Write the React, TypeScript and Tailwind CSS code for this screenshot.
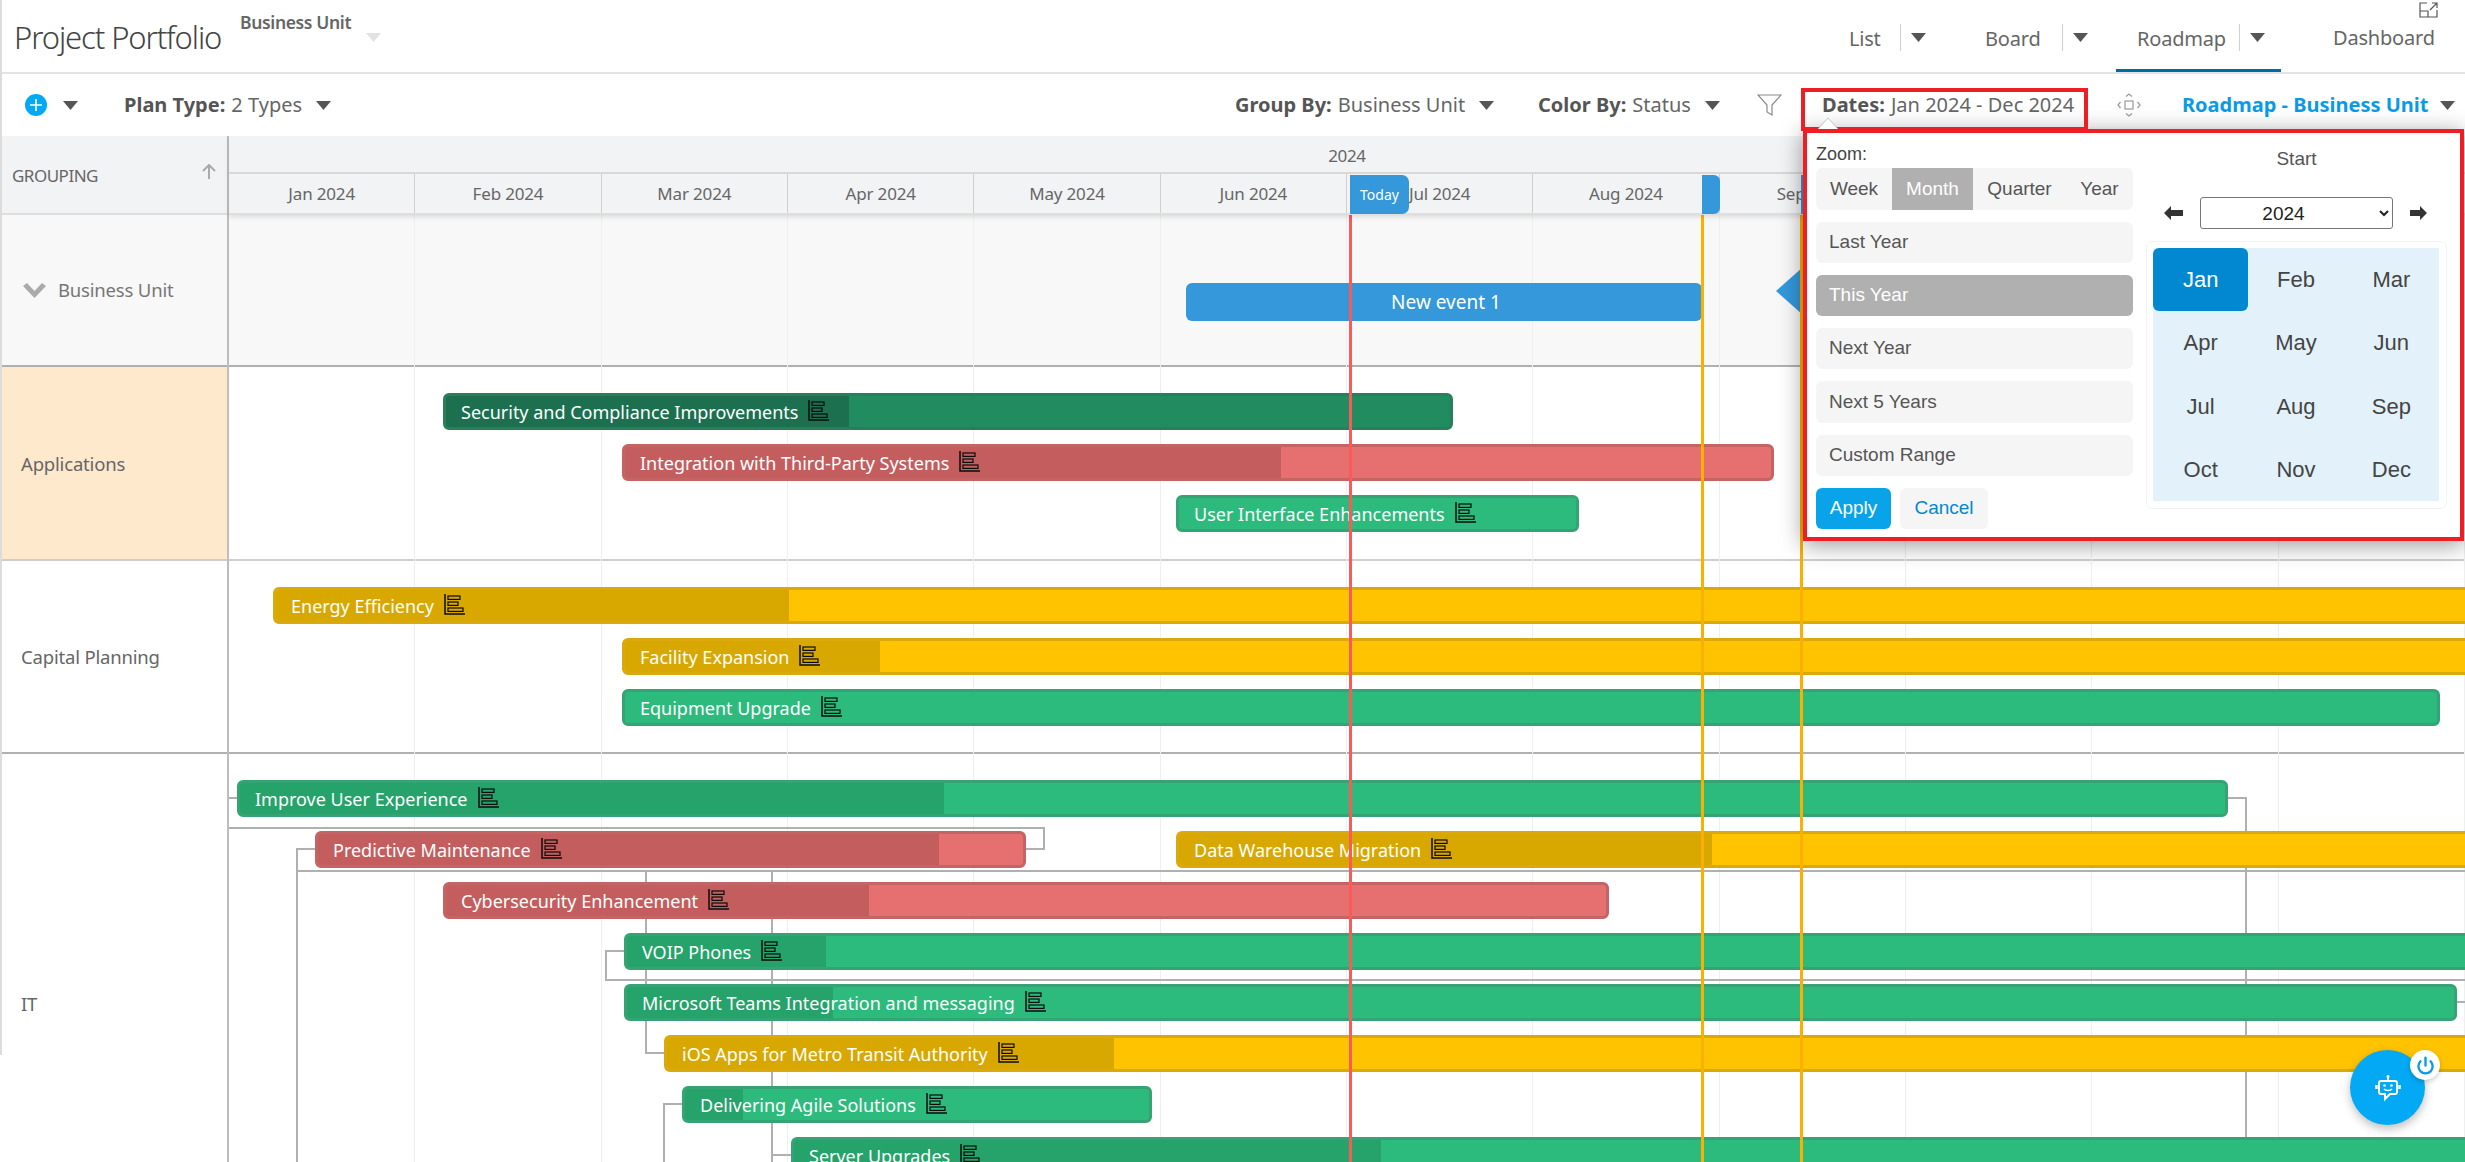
import React from "react";
import { Power } from "lucide-react";

const X0 = 229;
const Y0 = 215;

const MONTHS = ["Jan", "Feb", "Mar", "Apr", "May", "Jun", "Jul", "Aug", "Sep", "Oct", "Nov", "Dec"];

type Tone = "green" | "red" | "yellow" | "dark";
type BarData = { label?: string; x: number; end: number; y: number; progress: number; tone: Tone };

const TONES: Record<Tone, { border: string; fill: string; done: string }> = {
  green: { border: "border-[#36a374]", fill: "bg-[#2cbb7c]", done: "bg-[#26a26b]" },
  red: { border: "border-[#c46464]", fill: "bg-[#e67070]", done: "bg-[#c45e5e]" },
  yellow: { border: "border-[#d9a90f]", fill: "bg-[#ffc300]", done: "bg-[#d9a800]" },
  dark: { border: "border-[#2a7f5a]", fill: "bg-[#218c5f]", done: "bg-[#1c7050]" },
};

const BARS: BarData[] = [
  { label: "Security and Compliance Improvements", x: 443, end: 1453, y: 393, progress: 849, tone: "dark" },
  { label: "Integration with Third-Party Systems", x: 622, end: 1774, y: 444, progress: 1281, tone: "red" },
  { label: "User Interface Enhancements", x: 1176, end: 1579, y: 495, progress: 1176, tone: "green" },
  { label: "Energy Efficiency", x: 273, end: 2480, y: 587, progress: 789, tone: "yellow" },
  { label: "Facility Expansion", x: 622, end: 2480, y: 638, progress: 880, tone: "yellow" },
  { label: "Equipment Upgrade", x: 622, end: 2440, y: 689, progress: 622, tone: "green" },
  { label: "Improve User Experience", x: 237, end: 2228, y: 780, progress: 944, tone: "green" },
  { label: "Predictive Maintenance", x: 315, end: 1026, y: 831, progress: 939, tone: "red" },
  { label: "Data Warehouse Migration", x: 1176, end: 2480, y: 831, progress: 1712, tone: "yellow" },
  { label: "Cybersecurity Enhancement", x: 443, end: 1609, y: 882, progress: 869, tone: "red" },
  { label: "VOIP Phones", x: 624, end: 2480, y: 933, progress: 826, tone: "green" },
  { label: "Microsoft Teams Integration and messaging", x: 624, end: 2457, y: 984, progress: 833, tone: "green" },
  { label: "iOS Apps for Metro Transit Authority", x: 664, end: 2480, y: 1035, progress: 1114, tone: "yellow" },
  { label: "Delivering Agile Solutions", x: 682, end: 1152, y: 1086, progress: 743, tone: "green" },
  { label: "Server Upgrades", x: 791, end: 2480, y: 1137, progress: 1381, tone: "green" },
];

const LINES = [
  { x: 229, y: 797, w: 8, h: 2 },
  { x: 2228, y: 797, w: 19, h: 2 },
  { x: 2245, y: 797, w: 2, h: 365 },
  { x: 229, y: 827, w: 815, h: 2 },
  { x: 1043, y: 827, w: 2, h: 23 },
  { x: 1025, y: 848, w: 19, h: 2 },
  { x: 297, y: 848, w: 18, h: 2 },
  { x: 296, y: 848, w: 2, h: 314 },
  { x: 296, y: 870, w: 2170, h: 2 },
  { x: 645, y: 870, w: 2, h: 184 },
  { x: 645, y: 1052, w: 19, h: 2 },
  { x: 771, y: 870, w: 2, h: 292 },
  { x: 771, y: 1154, w: 20, h: 2 },
  { x: 605, y: 950, w: 19, h: 2 },
  { x: 605, y: 950, w: 2, h: 31 },
  { x: 605, y: 979, w: 1860, h: 2 },
  { x: 664, y: 1103, w: 18, h: 2 },
  { x: 663, y: 1103, w: 2, h: 59 },
  { x: 2457, y: 1001, w: 8, h: 2 },
];

function Caret({ className = "fill-[#555555]" }: { className?: string }) {
  return (
    <svg width="15" height="9" viewBox="0 0 15 9" className={className}>
      <polygon points="0,0 15,0 7.5,9" />
    </svg>
  );
}

function GanttIcon() {
  return (
    <svg width="21" height="21" viewBox="0 0 21 21" fill="none" stroke="#0b0b0b" strokeWidth="1.2" className="ml-[10px] mb-[3px] shrink-0">
      <path d="M1 0V20H21" strokeWidth="1.5" />
      <rect x="4" y="2" width="12" height="3.4" />
      <rect x="4" y="8" width="10" height="3.4" />
      <rect x="4" y="14" width="15" height="3.4" />
    </svg>
  );
}

function Bar({ bar }: { bar: BarData }) {
  const t = TONES[bar.tone];
  const width = bar.end - bar.x;
  return (
    <div
      className={`absolute h-[37px] rounded-[6px] border-[3px] overflow-hidden ${t.border} ${t.fill}`}
      style={{ left: bar.x - X0, top: bar.y - Y0, width }}
    >
      <div className={`absolute left-0 top-0 bottom-0 ${t.done}`} style={{ width: Math.max(0, bar.progress - bar.x - 3) }} />
      <div className="relative flex h-full items-center whitespace-nowrap pl-[15px] text-[18px] leading-none text-white font-['Noto_Sans',sans-serif]">
        <span>{bar.label}</span>
        <GanttIcon />
      </div>
    </div>
  );
}

function Tab({ label, left, toSep, width, active }: { label: string; left: number; toSep: number; width: number; active?: boolean }) {
  return (
    <div className={`flex h-full items-center border-b-[3px] pt-[6px] ${active ? "border-[#0069a8]" : "border-transparent"}`} style={{ width, paddingLeft: left }}>
      <span className="whitespace-nowrap pt-[3px]" style={{ width: toSep }}>{label}</span>
      <span className="h-[27px] w-px bg-[#d0d0d0]" />
      <span className="ml-[10px] flex items-center"><Caret /></span>
    </div>
  );
}

function Labeled({ name, value, width, caret = true }: { name: string; value: string; width: number; caret?: boolean }) {
  return (
    <div className="flex items-center whitespace-nowrap" style={{ width }}>
      <span className="font-bold text-[#555555]">{name}</span>
      <span className="ml-[6px]">{value}</span>
      {caret && <span className="ml-[14px]"><Caret /></span>}
    </div>
  );
}

function RobotIcon() {
  return (
    <svg width="26" height="28" viewBox="0 0 26 28" fill="none" stroke="#ffffff" strokeWidth="2">
      <circle cx="13" cy="2.5" r="1.5" fill="#fff" stroke="none" />
      <path d="M13 3V7" />
      <path d="M6 7H20A2 2 0 0 1 22 9V18A2 2 0 0 1 20 20H15L10 25V20H6A2 2 0 0 1 4 18V9A2 2 0 0 1 6 7Z" />
      <path d="M1.5 11V15M24.5 11V15" strokeWidth="2.5" />
      <circle cx="9.5" cy="11.5" r="1.3" fill="#fff" stroke="none" />
      <circle cx="16.5" cy="11.5" r="1.3" fill="#fff" stroke="none" />
      <path d="M9 15C10.5 17 15.5 17 17 15" strokeWidth="1.6" />
    </svg>
  );
}

export default function App() {
  return (
    <div className="relative h-screen w-full overflow-hidden bg-white text-[#666666] font-['Noto_Sans',sans-serif]">
      {/* Left edge rule */}
      <div className="absolute left-0 top-0 z-20 h-[1055px] w-[2px] bg-[#dcdcdc]" />

      {/* Top header */}
      <header className="flex h-[74px] items-stretch border-b-2 border-[#e3e3e3]">
        <div className="flex w-[240px] items-center pl-[14px] pt-[3px] text-[31px] font-light tracking-[-0.035em] text-[#444444] whitespace-nowrap">Project Portfolio</div>
        <div className="flex w-[150px] flex-col pt-[12px]">
          <span className="text-[17.5px] font-semibold leading-[20px] tracking-[-0.02em] text-[#666666] whitespace-nowrap">Business Unit</span>
          <span className="ml-[126px] mt-px"><Caret className="fill-[#e2e2e2]" /></span>
        </div>
        <nav className="ml-auto flex w-[637px] items-stretch text-[20px] tracking-[-0.01em] text-[#666666]">
          <Tab label="List" left={21} toSep={51} width={136} />
          <Tab label="Board" left={21} toSep={77} width={152} />
          <Tab label="Roadmap" left={21} toSep={102} width={165} active />
          <div className="relative flex items-center pl-[52px] pt-[4px]">
            <span className="whitespace-nowrap">Dashboard</span>
            <svg width="19" height="16" viewBox="0 0 19 16" fill="none" stroke="#555" strokeWidth="1.2" className="absolute left-[138px] top-[2px]">
              <path d="M8 1H1V15H18V8" />
              <path d="M1 9H9V15" />
              <path d="M11 8L18 1M13 1H18V6" />
            </svg>
          </div>
        </nav>
      </header>

      {/* Toolbar */}
      <div className="flex h-[62px] items-center text-[20px] text-[#666666]">
        <div className="flex w-[1235px] items-center">
          <span className="ml-[25px] flex h-[22px] w-[22px] items-center justify-center rounded-full bg-[#03a9f4]">
            <svg width="14" height="14" viewBox="0 0 14 14" stroke="#fff" strokeWidth="1.6"><path d="M7 1V13M1 7H13" /></svg>
          </span>
          <span className="ml-[16px]"><Caret /></span>
          <div className="ml-[46px]"><Labeled name="Plan Type:" value="2 Types" width={300} /></div>
        </div>
        <Labeled name="Group By:" value="Business Unit" width={303} />
        <Labeled name="Color By:" value="Status" width={219} />
        <div className="flex w-[65px] items-center">
          <svg width="25" height="22" viewBox="0 0 25 22" fill="none" stroke="#8a8a8a" strokeWidth="1.2">
            <path d="M1 1H24L15 11V21L10 18V11Z" />
          </svg>
        </div>
        <Labeled name="Dates:" value="Jan 2024 - Dec 2024" width={295} caret={false} />
        <div className="flex w-[65px] items-center">
          <svg width="24" height="24" viewBox="0 0 24 24" fill="none" stroke="#9a9a9a" strokeWidth="1.2">
            <rect x="8" y="8" width="8" height="8" />
            <path d="M9 3.5L12 1L15 3.5M9 20.5L12 23L15 20.5M3.5 9L1 12L3.5 15M20.5 9L23 12L20.5 15" />
          </svg>
        </div>
        <div className="flex items-center whitespace-nowrap font-bold text-[#0a9be8]">
          <span className="w-[258px]">Roadmap - Business Unit</span>
          <Caret />
        </div>
      </div>

      {/* Gantt */}
      <div className="flex h-[1026px] overflow-hidden">
        {/* Sidebar */}
        <aside className="flex w-[229px] shrink-0 flex-col border-r-2 border-[#bdbdbd] text-[18.5px] tracking-[-0.01em] text-[#666666]">
          <div className="flex h-[79px] shrink-0 items-center border-b-2 border-[#dedede] bg-[#f2f3f5] pl-[12px] pr-[11px]">
            <span className="pt-[2px] text-[17px] tracking-[-0.03em]">GROUPING</span>
            <svg width="14" height="15" viewBox="0 0 14 15" fill="none" stroke="#aaaaaa" strokeWidth="2" className="ml-auto mb-[6px]">
              <path d="M7 15V2M1 7L7 1L13 7" />
            </svg>
          </div>
          <div className="flex h-[152px] shrink-0 items-center border-b-2 border-[#b0b0b0] bg-[#f8f8f8] pl-[23px]">
            <svg width="23" height="15" viewBox="0 0 23 15" fill="#aaaaaa"><polygon points="0,3 4,0 11.5,8 19,0 23,3 11.5,15" /></svg>
            <span className="ml-[12px] text-[#777777]">Business Unit</span>
          </div>
          <div className="flex h-[194px] shrink-0 items-center border-b-2 border-[#d0cdc8] bg-[#fee9cc] pl-[21px] pt-px">Applications</div>
          <div className="flex h-[193px] shrink-0 items-center border-b-2 border-[#b0b0b0] pl-[21px]">Capital Planning</div>
          <div className="flex h-[500px] shrink-0 items-center pl-[21px]">IT</div>
        </aside>

        {/* Timeline */}
        <section className="relative min-w-0 flex-1">
          <div className="relative z-10 h-[79px] border-b-2 border-[#dedede] bg-[#f2f3f5] shadow-[0_2px_5px_rgba(0,0,0,0.12)]">
            <div className="flex h-[38px] items-center justify-center border-b-2 border-[#d8d8d8] text-[17px] tracking-[-0.02em]">
              <span className="pt-[4px]">2024</span>
            </div>
            <div className="grid h-[39px] grid-cols-12 text-[17px] tracking-[-0.01em]">
              {MONTHS.map((m, i) => (
                <div key={m} className={`flex items-center justify-center ${i < 11 ? "border-r border-[#cfcfcf]" : ""}`}>{m} 2024</div>
              ))}
            </div>
            {/* date tags */}
            <div className="absolute left-[1121px] top-[39px] flex h-[39px] w-[59px] items-center justify-center rounded-r-[7px] bg-[#3498db] text-[14px] text-white">Today</div>
            <div className="absolute left-[1473px] top-[39px] h-[39px] w-[18px] rounded-r-[6px] bg-[#3498db]" />
            <div className="absolute left-[1572px] top-[39px] h-[39px] w-[6px] bg-[#3498db]" />
          </div>

          <div className="relative h-[947px] overflow-hidden">
            {/* row backgrounds */}
            <div className="h-[152px] border-b-2 border-[#b0b0b0] bg-[#f8f8f8]" />
            <div className="h-[194px] border-b-2 border-[#cfcfcf]" />
            <div className="h-[193px] border-b-2 border-[#b0b0b0]" />

            {/* month grid */}
            <div className="absolute inset-0 grid grid-cols-12">
              {MONTHS.map((m) => (
                <div key={m} className="border-r border-[#efefef]" />
              ))}
            </div>

            {LINES.map((l, i) => (
              <div key={i} className="absolute bg-[#b0b0b0]" style={{ left: l.x - X0, top: l.y - Y0, width: l.w, height: l.h }} />
            ))}

            {/* event + milestone */}
            <div className="absolute flex h-[38px] items-center justify-center rounded-[6px] bg-[#3498db] pl-[4px] text-[19px] text-white" style={{ left: 1186 - X0, top: 283 - Y0, width: 516 }}>
              New event 1
            </div>
            <svg width="54" height="48" viewBox="0 0 54 48" className="absolute fill-[#3498db]" style={{ left: 1776 - X0, top: 267 - Y0 }}>
              <polygon points="0,24 27,0 54,24 27,48" />
            </svg>

            {BARS.map((b) => (
              <Bar key={b.label} bar={b} />
            ))}

            {/* markers */}
            <div className="absolute inset-y-0 w-[3px] bg-[#f95a5a]" style={{ left: 1349 - X0 }} />
            <div className="absolute inset-y-0 w-[3px] bg-[#fbb000]" style={{ left: 1701 - X0 }} />
            <div className="absolute inset-y-0 w-[3px] bg-[#fbb000]" style={{ left: 1800 - X0 }} />
          </div>
        </section>
      </div>

      {/* Dates highlight */}
      <div className="pointer-events-none absolute left-[1801px] top-[88px] z-40 h-[43px] w-[287px] border-4 border-[#ee1f24]" />
      <svg width="20" height="11" viewBox="0 0 20 11" fill="#ffffff" stroke="#c4c4c4" className="absolute left-[1818px] top-[118px] z-40">
        <path d="M0 11L10 0L20 11" />
      </svg>

      {/* Dates popover */}
      <div className="absolute left-[1803px] top-[129px] z-30 flex h-[412px] w-[661px] border-4 border-[#ee1f24] bg-white pl-[9px] text-[#444444] shadow-[0_4px_22px_rgba(0,0,0,0.4)] font-['Liberation_Sans',Arial,sans-serif]">
        <div className="flex w-[317px] flex-col">
          <div className="pt-[8px] text-[18px] leading-[27px] text-[#444444]">Zoom:</div>
          <div className="flex h-[42px] overflow-hidden rounded-[6px] bg-[#f5f5f5] text-[19px] text-[#555555]">
            <span className="flex w-[76px] items-center justify-center">Week</span>
            <span className="flex w-[81px] items-center justify-center bg-[#b0b0b0] text-white">Month</span>
            <span className="flex w-[93px] items-center justify-center">Quarter</span>
            <span className="flex w-[67px] items-center justify-center">Year</span>
          </div>
          <div className="mt-[12px] flex flex-col gap-[12px] text-[19px]">
            <div className="flex h-[41px] items-center rounded-[6px] bg-[#f5f5f5] pl-[13px] text-[#555555]">Last Year</div>
            <div className="flex h-[41px] items-center rounded-[6px] bg-[#b0b0b0] pl-[13px] text-white">This Year</div>
            <div className="flex h-[41px] items-center rounded-[6px] bg-[#f5f5f5] pl-[13px] text-[#555555]">Next Year</div>
            <div className="flex h-[42px] items-center rounded-[6px] bg-[#f5f5f5] pl-[13px] text-[#555555]">Next 5 Years</div>
            <div className="flex h-[41px] items-center rounded-[6px] bg-[#f5f5f5] pl-[13px] text-[#555555]">Custom Range</div>
          </div>
          <div className="mt-[12px] flex gap-[9px] text-[19px]">
            <span className="flex h-[41px] w-[75px] items-center justify-center rounded-[6px] bg-[#09a3ea] text-white">Apply</span>
            <span className="flex h-[41px] w-[88px] items-center justify-center rounded-[6px] bg-[#f5f5f5] text-[#0288d1]">Cancel</span>
          </div>
        </div>
        <div className="ml-[13px] flex w-[301px] flex-col">
          <div className="pt-[14px] text-center text-[19px] leading-[24px] text-[#555555]">Start</div>
          <div className="mt-[26px] flex h-[32px] items-center pl-[18px]">
            <svg width="19" height="14" viewBox="0 0 19 14" fill="#333333"><path d="M0 7L7 0V4H19V10H7V14Z" /></svg>
            <select defaultValue="2024" className="ml-[17px] h-[32px] w-[193px] rounded-[3px] border border-[#767676] bg-white pr-[14px] text-center text-[19px] text-[#222222]">
              <option>2024</option>
            </select>
            <svg width="17" height="14" viewBox="0 0 17 14" fill="#333333" className="ml-[17px]"><path d="M17 7L10 0V4H0V10H10V14Z" /></svg>
          </div>
          <div className="mt-[12px] h-[268px] rounded-[6px] border border-[#f3f3f3] pl-[6px] pr-[7px] pt-[6px] pb-[7px]">
            <div className="grid h-full grid-cols-3 grid-rows-4 bg-[#e3f2fa] text-[22px] text-[#444444]">
              {MONTHS.map((m, i) => (
                <div key={m} className={`flex items-center justify-center ${i === 0 ? "rounded-[6px] bg-[#0288d0] text-white" : ""}`}>{m}</div>
              ))}
            </div>
          </div>
        </div>
      </div>

      {/* Assistant button */}
      <div className="absolute left-[2350px] top-[1050px] z-40 flex h-[75px] w-[75px] items-center justify-center rounded-full bg-[#03a9f4] shadow-[0_4px_10px_rgba(0,0,0,0.25)]">
        <RobotIcon />
      </div>
      <div className="absolute left-[2410px] top-[1050px] z-50 flex h-[30px] w-[30px] items-center justify-center rounded-full bg-white shadow-[0_2px_5px_rgba(0,0,0,0.2)]">
        <Power size={19} strokeWidth={3} className="text-[#0a9be8]" />
      </div>
    </div>
  );
}
